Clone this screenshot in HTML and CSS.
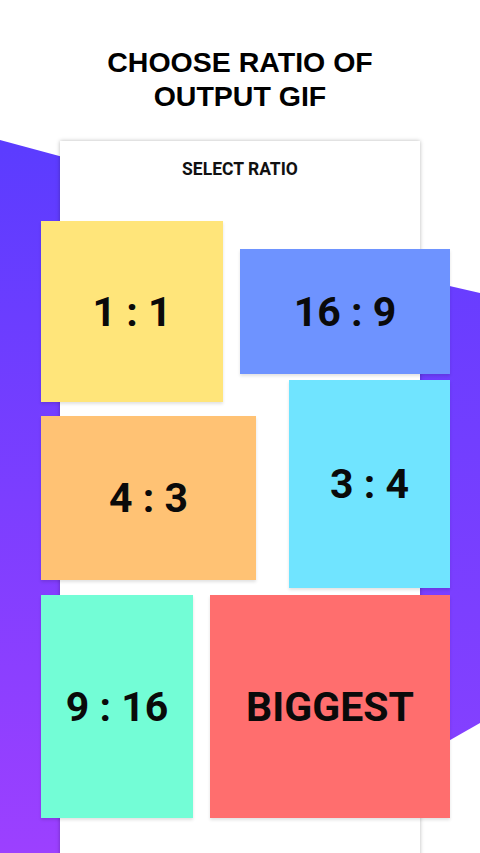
FILE: index.html
```html
<!DOCTYPE html>
<html lang="en">
<head>
<meta charset="utf-8">
<title>Choose ratio of output GIF</title>
<link rel="stylesheet" href="styles.css">
</head>
<body>
<div class="screen">
  <svg class="backdrop" width="480" height="853" viewBox="0 0 480 853" aria-hidden="true">
    <defs>
      <linearGradient id="gl" x1="0" y1="140" x2="0" y2="853" gradientUnits="userSpaceOnUse">
        <stop offset="0" stop-color="#5b3cff"/>
        <stop offset="1" stop-color="#9c40ff"/>
      </linearGradient>
      <linearGradient id="gr" x1="0" y1="270" x2="0" y2="780" gradientUnits="userSpaceOnUse">
        <stop offset="0" stop-color="#683dff"/>
        <stop offset="1" stop-color="#8640ff"/>
      </linearGradient>
    </defs>
    <polygon points="0,140 100,167 100,853 0,853" fill="url(#gl)"/>
    <polygon points="380,270 480,293 480,723 380,780" fill="url(#gr)"/>
  </svg>

  <h1 class="title">CHOOSE RATIO OF<br>OUTPUT GIF</h1>

  <section class="card">
    <h2 class="card-title">SELECT RATIO</h2>
    <div class="tiles">
      <div class="col col-left">
        <div class="tile t-yellow">1 : 1</div>
        <div class="tile t-orange">4 : 3</div>
        <div class="tile t-mint">9 : 16</div>
      </div>
      <div class="col col-right">
        <div class="tile t-blue">16 : 9</div>
        <div class="tile t-cyan">3 : 4</div>
        <div class="tile t-red">BIGGEST</div>
      </div>
    </div>
  </section>
</div>
</body>
</html>
```
FILE: styles.css
```css
html, body {
  margin: 0;
  padding: 0;
  background: #ffffff;
}

.screen {
  position: relative;
  width: 480px;
  height: 853px;
  overflow: hidden;
  background: #ffffff;
  padding-top: 45px;
  box-sizing: border-box;
}

.backdrop {
  position: absolute;
  left: 0;
  top: 0;
  z-index: 0;
}

.title {
  position: relative;
  z-index: 1;
  margin: 0;
  font-family: "Liberation Sans", Arial, sans-serif;
  font-weight: 700;
  font-size: 28.5px;
  line-height: 34px;
  text-align: center;
  color: #000000;
}

.card {
  position: relative;
  z-index: 1;
  margin: 28px 0 0 60px;
  width: 360px;
  height: 760px;
  background: #ffffff;
  box-shadow: 0 0 4px rgba(0, 0, 0, 0.28);
  padding-top: 18px;
  box-sizing: border-box;
}

.card-title {
  margin: 0;
  font-family: Roboto, "Liberation Sans", sans-serif;
  font-weight: 700;
  font-size: 17.5px;
  line-height: 20px;
  text-align: center;
  color: #111111;
}

.tiles {
  display: grid;
  margin: 42px -30px 0 -19px;
}

.col {
  grid-area: 1 / 1;
  display: flex;
  flex-direction: column;
}

.col-left {
  align-items: flex-start;
}

.col-right {
  align-items: flex-end;
  padding-top: 28px;
}

.tile {
  display: flex;
  align-items: center;
  justify-content: center;
  font-family: Roboto, "Liberation Sans", sans-serif;
  font-weight: 700;
  font-size: 41px;
  color: #0a0a0a;
  box-shadow: 0 2px 3px rgba(0, 0, 0, 0.12);
}

.t-yellow { width: 182px; height: 181px; background: #ffe57a; }
.t-orange { width: 215px; height: 164px; background: #ffc274; margin-top: 14px; }
.t-mint   { width: 152px; height: 223px; background: #73fdd6; margin-top: 15px; }

.t-blue { width: 210px; height: 125px; background: #6e93ff; }
.t-cyan { width: 161px; height: 208px; background: #70e4ff; margin-top: 6px; }
.t-red  { width: 240px; height: 223px; background: #ff6e6e; margin-top: 7px; }
```
